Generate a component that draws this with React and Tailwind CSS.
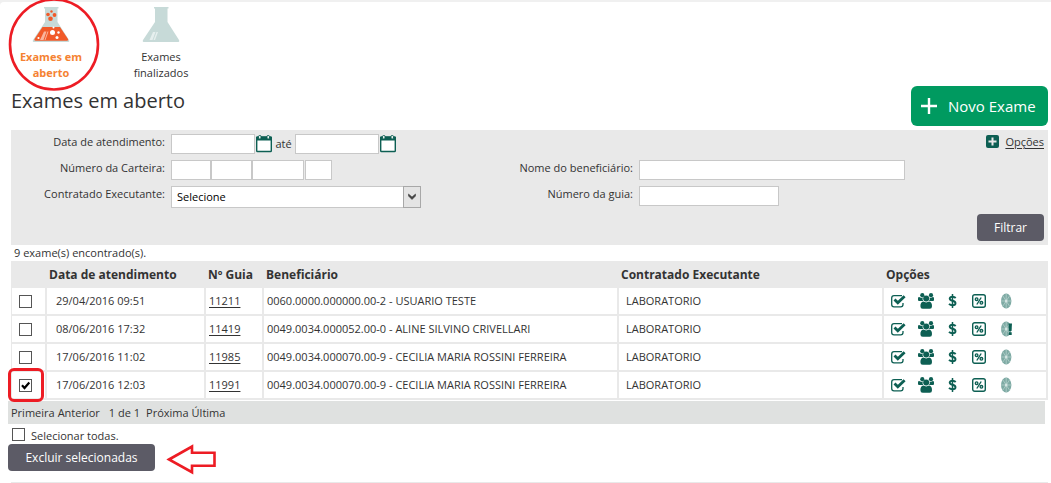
import React, { useState } from "react";

const rows = [
  { date: "29/04/2016 09:51", guia: "11211", name: "0060.0000.000000.00-2 - USUARIO TESTE" },
  { date: "08/06/2016 17:32", guia: "11419", name: "0049.0034.000052.00-0 - ALINE SILVINO CRIVELLARI", alert: true },
  { date: "17/06/2016 11:02", guia: "11985", name: "0049.0034.000070.00-9 - CECILIA MARIA ROSSINI FERREIRA" },
  { date: "17/06/2016 12:03", guia: "11991", name: "0049.0034.000070.00-9 - CECILIA MARIA ROSSINI FERREIRA", checked: true },
];

function Flask({ active }) {
  return (
    <svg width="38" height="36" viewBox="0 0 38 36" aria-hidden="true">
      <path d="M12 0h14.500v1.500h-1V15l11.500 18q1 2-1.500 2h-33Q0 35 1 33L13 15V1.500h-1z" fill="#c7dad8" />
      {active ? (
        <>
          <path d="M10.500 20h17.500l8 12q.8 1.800-1 1.800H3.500q-1.800 0-1-1.800z" fill="#f15a29" />
          <g fill="#f15a29">
            <circle cx="19.500" cy="4.500" r="1.200" />
            <circle cx="16" cy="7.500" r="1.800" />
            <circle cx="22.500" cy="8" r="1.900" />
            <circle cx="18.500" cy="11.800" r="2.300" />
          </g>
          <g fill="#fff">
            <circle cx="20.500" cy="25.500" r="2.500" />
            <circle cx="26.500" cy="25.500" r="1.200" />
            <circle cx="21.500" cy="20.500" r="1" />
            <circle cx="6.500" cy="31" r="1.100" />
            <circle cx="25" cy="30.500" r="1.500" />
          </g>
          <path d="M12 24.500h2.500l-3 8.500H8zM15.500 24.500h1l-3 8.500h-1z" fill="#f9b49c" />
        </>
      ) : (
        <path d="M11 25h2.500l-3 8H7.500zM14.500 25H16l-3 8h-1.500z" fill="#e6efee" />
      )}
    </svg>
  );
}

function CalendarIcon() {
  return (
    <svg width="16" height="18" viewBox="0 0 16 18" aria-hidden="true">
      <rect x="0.700" y="2" width="14.600" height="14.500" rx="0.800" fill="#fff" stroke="#0d5f53" strokeWidth="1.400" />
      <path d="M0 1.800h16V5.500H0z" fill="#0d5f53" />
      <rect x="2.600" y="0.500" width="2.400" height="3.500" rx="1" fill="#fff" stroke="#0d5f53" />
      <rect x="11" y="0.500" width="2.400" height="3.500" rx="1" fill="#fff" stroke="#0d5f53" />
    </svg>
  );
}

function CheckSquareIcon() {
  return (
    <svg width="15" height="14" viewBox="0 0 15 14" fill="none" stroke="#0d5f53" aria-hidden="true">
      <path d="M11 1.700H3Q.7 1.700.7 4v6.500q0 2.300 2.300 2.300h6.700q2.300 0 2.300-2.300V9" strokeWidth="1.300" />
      <path d="M3.500 5.500l3.300 3.300L13.600 2.200" strokeWidth="2.800" />
    </svg>
  );
}

function UsersIcon() {
  return (
    <svg width="16" height="16" viewBox="0 0 16 16" fill="#0d5f53" aria-hidden="true">
      <circle cx="4.300" cy="2.200" r="2.100" />
      <circle cx="13" cy="2.200" r="2.100" />
      <path d="M0 5.500q0-1.500 1.200-1.400 1.500 1 3.600.3Q4 6 5.200 8H1Q0 8 0 6.800zM16 5.500q0-1.500-1.200-1.400-1.500 1-3.200.3.800 1.600-.6 3.600h4q1 0 1-1.200z" />
      <circle cx="8.200" cy="5.600" r="3" />
      <path d="M5.200 8.600q3 1.600 6 0Q14 9.300 14 13.200q0 2.500-2.300 2.500h-7q-2.300 0-2.300-2.500 0-3.900 2.800-4.600z" />
    </svg>
  );
}

function DollarIcon() {
  return (
    <svg width="9" height="14" viewBox="0 0 9 14" fill="none" stroke="#0d5f53" aria-hidden="true">
      <path d="M7.700 4Q6.500 2.700 4.500 2.700 1.700 2.700 1.700 4.600q0 1.600 2.800 2.200 3 .7 3 2.500 0 2-3 2Q2.300 11.300 1 9.900" strokeWidth="1.900" />
      <path d="M4.500 0v14" strokeWidth="1.500" />
    </svg>
  );
}

function PercentIcon() {
  return (
    <svg width="14" height="14" viewBox="0 0 14 14" fill="none" stroke="#0d5f53" aria-hidden="true">
      <rect x="0.700" y="0.700" width="12.600" height="12.600" rx="2" strokeWidth="1.400" />
      <circle cx="4.600" cy="5.200" r="1.300" strokeWidth="1.400" />
      <circle cx="9.400" cy="8.800" r="1.300" strokeWidth="1.400" />
      <path d="M9.200 3.500L4.800 10.500" strokeWidth="1.400" />
    </svg>
  );
}

function DiscIcon({ alert }) {
  return (
    <svg width="11" height="16" viewBox="0 0 11 16" aria-hidden="true">
      <ellipse cx="5.200" cy="8" rx="5.200" ry="7.500" fill="#7eaaa4" />
      <path d="M5.200.5v15M0 8h10.400M1.700 2.700l7 10.600M8.700 2.700l-7 10.600" stroke="#b5d0cc" strokeWidth="0.800" />
      <ellipse cx="5.200" cy="8" rx="1.300" ry="1.600" fill="#d5e5e3" />
      {alert && <path d="M7.500 2.500H11l-.5 7.500H8zM7.800 11.200h2.900V14H7.800z" fill="#0d5f53" />}
    </svg>
  );
}

function Tick({ label, defaultChecked = false }) {
  return (
    <span className="relative block size-[13px]">
      <input
        type="checkbox"
        aria-label={label}
        id={label ? undefined : "todas"}
        defaultChecked={defaultChecked}
        className="peer block size-[13px] appearance-none border border-[#555] bg-white"
      />
      <svg viewBox="0 0 13 13" className="pointer-events-none absolute inset-0 hidden size-[13px] peer-checked:block" aria-hidden="true">
        <path d="M3 6.300l2.500 2.700L10.300 3.500" fill="none" stroke="#000" strokeWidth="2.200" />
      </svg>
    </span>
  );
}

const field = "h-5 border border-[#c8c8c8] bg-white px-1 outline-none";
const label = "text-right leading-4";
const th = "h-[27px] pl-[2px] text-left text-xs font-bold";
const td = "h-7 border-b-2 border-r-2 border-[#e9e9e9] p-0";
const btn = "h-[27px] rounded bg-[#5c5b66] text-xs text-white";

export default function App() {
  const [executor, setExecutor] = useState("Selecione");
  return (
    <div className="bg-[#f0f0f0] pt-[2px] font-['Open_Sans','Noto_Sans',sans-serif] text-[11px] text-[#333]">
      <div className="relative rounded-tl bg-white pl-[11px] pr-[3px]">
        <nav className="flex h-[84px] gap-5 pt-[5px] text-center leading-4">
          <a href="#abertos" className="-ml-[5px] flex w-[90px] flex-col items-center gap-[6px] font-bold text-[#f58232]">
            <Flask active />
            <span className="w-20">Exames em aberto</span>
          </a>
          <a href="#finalizados" className="flex w-[90px] flex-col items-center gap-[6px]">
            <Flask />
            <span className="w-16">Exames finalizados</span>
          </a>
        </nav>
        <svg className="pointer-events-none absolute -top-[2px] left-[8px]" width="92" height="92" viewBox="0 0 92 92" aria-hidden="true">
          <ellipse cx="46" cy="44.500" rx="44" ry="45" fill="none" stroke="#ed1c24" strokeWidth="2.600" />
        </svg>

        <header className="flex items-start justify-between">
          <h1 className="text-xl leading-[30px]">Exames em aberto</h1>
          <button type="button" className="flex h-10 w-[137px] items-center gap-[11px] rounded-md bg-[#009a60] pl-[10px] text-[15px] text-white">
            <svg width="16" height="16" viewBox="0 0 16 16" aria-hidden="true">
              <path d="M8 0v16M0 8h16" stroke="#fff" strokeWidth="2.400" />
            </svg>
            Novo Exame
          </button>
        </header>

        <form className="mt-1 bg-[#e9e9e9] pb-1 pt-1" onSubmit={(e) => e.preventDefault()}>
          <div className="grid grid-cols-[154px_250px_206px_minmax(0,266px)_1fr] gap-x-[6px] gap-y-[6px]">
            <label htmlFor="de" className={label}>Data de atendimento:</label>
            <div className="flex items-center">
              <input id="de" className={`${field} w-[84px]`} />
              <button type="button" aria-label="Abrir calendário inicial" className="ml-px"><CalendarIcon /></button>
              <label htmlFor="ate" className="w-[23px] text-center">até</label>
              <input id="ate" className={`${field} w-[84px]`} />
              <button type="button" aria-label="Abrir calendário final" className="ml-px"><CalendarIcon /></button>
            </div>
            <div className="col-span-3 flex items-start justify-end gap-[6px] pr-1">
              <svg width="13" height="13" viewBox="0 0 13 13" className="mt-px" aria-hidden="true">
                <rect width="13" height="13" rx="2" fill="#0d5f53" />
                <path d="M6.500 2.500v8M2.500 6.500h8" stroke="#e9e9e9" strokeWidth="2" />
              </svg>
              <a href="#opcoes" className="leading-4 underline underline-offset-2">Opções</a>
            </div>

            <label htmlFor="cart" className={label}>Número da Carteira:</label>
            <div className="flex">
              <input id="cart" className={`${field} w-10`} />
              <input aria-label="Carteira, parte 2" className={`${field} w-[41px]`} />
              <input aria-label="Carteira, parte 3" className={`${field} w-[52px]`} />
              <input aria-label="Carteira, parte 4" className={`${field} ml-px w-[27px]`} />
            </div>
            <label htmlFor="nome" className={label}>Nome do beneficiário:</label>
            <input id="nome" className={`${field} w-full`} />
            <span />

            <label htmlFor="exec" className={label}>Contratado Executante:</label>
            <div className="relative">
              <select
                id="exec"
                value={executor}
                onChange={(e) => setExecutor(e.target.value)}
                className="block h-[22px] w-full appearance-none border border-[#c8c8c8] bg-white pl-[5px] text-black"
              >
                <option>Selecione</option>
                <option>LABORATORIO</option>
              </select>
              <svg className="pointer-events-none absolute right-0 top-0" width="18" height="22" viewBox="0 0 18 22" aria-hidden="true">
                <rect x="0.500" y="0.500" width="17" height="21" fill="#e4e4e4" stroke="#a8a8a8" />
                <path d="M5.500 8v2l3.500 3.500L12.500 10V8L9 11z" fill="#444" stroke="#444" strokeWidth="0.600" />
              </svg>
            </div>
            <label htmlFor="guia" className={label}>Número da guia:</label>
            <input id="guia" className={`${field} w-[140px]`} />
          </div>
          <div className="mt-[6px] flex justify-end pr-1">
            <button type="submit" className={`${btn} w-[67px]`}>Filtrar</button>
          </div>
        </form>

        <p className="pl-[3px] leading-4">9 exame(s) encontrado(s).</p>

        <table className="w-full table-fixed border-separate border-spacing-0">
          <colgroup>
            <col className="w-[36px]" />
            <col className="w-[159px]" />
            <col className="w-[58px]" />
            <col />
            <col className="w-[265px]" />
            <col className="w-[164px]" />
          </colgroup>
          <thead className="bg-[#e9e9e9]">
            <tr>
              <td />
              <th scope="col" className={th}>Data de atendimento</th>
              <th scope="col" className={th}>Nº Guia</th>
              <th scope="col" className={th}>Beneficiário</th>
              <th scope="col" className={th}>Contratado Executante</th>
              <th scope="col" className={th}>Opções</th>
            </tr>
          </thead>
          <tbody>
            {rows.map((r) => (
              <tr key={r.guia}>
                <td className={`${td} border-l`}>
                  <div className="relative pl-[7px]">
                    <Tick label={`Selecionar ${r.guia}`} defaultChecked={r.checked} />
                    {r.checked && (
                      <span className="pointer-events-none absolute -left-[4px] -top-[11px] h-[34px] w-9 rounded-md border-[3px] border-[#ed1c24]" />
                    )}
                  </div>
                </td>
                <td className={`${td} pl-[9px]`}>{r.date}</td>
                <td className={`${td} pl-[3px]`}><a href={`#${r.guia}`} className="underline underline-offset-2">{r.guia}</a></td>
                <td className={`${td} whitespace-nowrap pl-[3px]`}>{r.name}</td>
                <td className={`${td} pl-[7px]`}>LABORATORIO</td>
                <td className={`${td} border-r pl-[7px]`}>
                  <div className="flex items-center">
                    <button type="button" aria-label="Confirmar" className="w-[27px]"><CheckSquareIcon /></button>
                    <button type="button" aria-label="Participantes" className="w-[30px]"><UsersIcon /></button>
                    <button type="button" aria-label="Valores" className="w-6"><DollarIcon /></button>
                    <button type="button" aria-label="Percentual" className="w-[29px]"><PercentIcon /></button>
                    <button type="button" aria-label="Mídia"><DiscIcon alert={r.alert} /></button>
                  </div>
                </td>
              </tr>
            ))}
          </tbody>
        </table>

        <nav className="-ml-[3px] mr-[3px] mt-px flex h-[23px] items-center bg-[#dfe1e0] pl-[3px] pt-px">
          <a href="#primeira">Primeira</a>
          <a href="#anterior" className="ml-[3px]">Anterior</a>
          <span className="ml-[9px]">1 de 1</span>
          <a href="#proxima" className="ml-[6px]">Próxima</a>
          <a href="#ultima" className="ml-[3px]">Última</a>
        </nav>

        <div className="flex h-5 items-center gap-[6px] pl-px">
          <Tick />
          <label htmlFor="todas" className="pt-1">Selecionar todas.</label>
        </div>
        <div className="-ml-[3px] flex items-center gap-3">
          <button type="button" className={`${btn} w-[147px]`}>Excluir selecionadas</button>
          <svg width="50" height="27" viewBox="0 0 50 27" className="overflow-visible" aria-hidden="true">
            <path d="M2 15.500L25 2.500v6.300h22.500v13H25v6.400z" fill="none" stroke="#ed1c24" strokeWidth="2.600" />
          </svg>
        </div>
        <div className="mt-[11px] h-px bg-[#e9e9e9]" />
      </div>
    </div>
  );
}
